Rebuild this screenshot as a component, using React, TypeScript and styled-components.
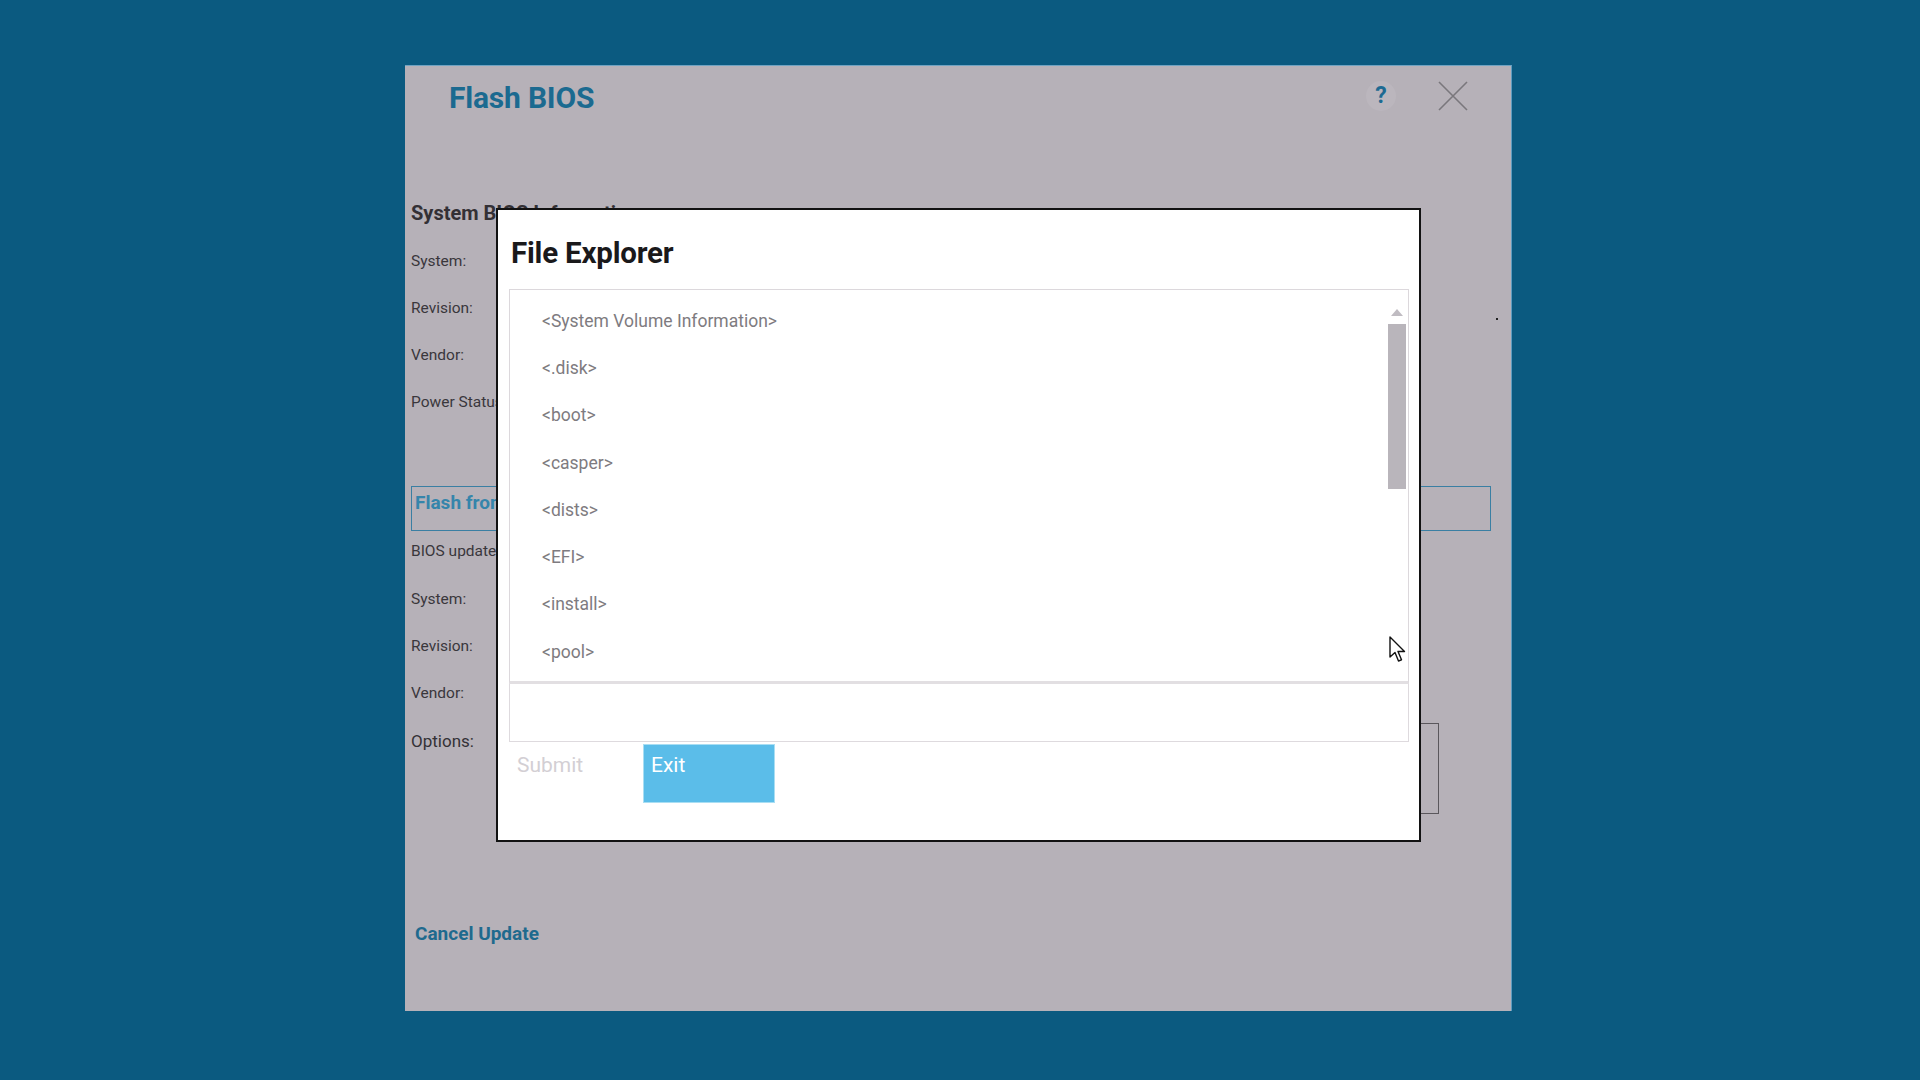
import React from "react";
import styled, { createGlobalStyle } from "styled-components";

const Global = createGlobalStyle`
  html, body { margin: 0; padding: 0; }
  body {
    background: #0b5a80;
    font-family: Roboto, "Liberation Sans", Arial, sans-serif;
  }
  #root { min-height: 1080px; }
`;

const Page = styled.div`
  width: 1920px;
  height: 1080px;
  box-sizing: border-box;
  padding: 65px 0 0 405px;
  background: #0b5a80;
  overflow: hidden;
`;

const Window = styled.div`
  position: relative;
  width: 1107px;
  height: 946px;
  box-sizing: border-box;
  background: #b6b1b8;
  border-top: 1px solid #6fa3c2;
  border-right: 1px solid #5f9cc0;
  display: flex;
  flex-direction: column;
  padding: 0 6px;
`;

const Header = styled.div`
  display: flex;
  align-items: flex-start;
  height: 122px;
  padding: 15px 37px 0 38px;
  box-sizing: border-box;
`;

const Title = styled.h1`
  margin: 0;
  font-size: 30px;
  line-height: 34px;
  font-weight: 700;
  color: #1b6a90;
  letter-spacing: -0.2px;
  flex: 1;
`;

const HelpIcon = styled.div`
  width: 30px;
  height: 30px;
  margin-top: 0px;
  border-radius: 50%;
  background: #bbb6bd;
  color: #1d6a92;
  font-weight: 700;
  font-size: 23px;
  line-height: 30px;
  text-align: center;
`;

const CloseBtn = styled.div`
  width: 30px;
  height: 30px;
  margin-left: 42px;
`;

const SectionHeading = styled.div`
  height: 49px;
  display: flex;
  align-items: center;
  font-size: 20px;
  font-weight: 700;
  color: #333035;
`;

const Row = styled.div<{ $h?: number; $pb?: number }>`
  height: ${(p) => p.$h ?? 47}px;
  box-sizing: border-box;
  padding-bottom: ${(p) => p.$pb ?? 0}px;
  display: flex;
  align-items: center;
  font-size: 15.5px;
  color: #3a373c;
`;

const FlashFromBox = styled.div`
  margin-top: 61px;
  height: 45px;
  box-sizing: border-box;
  border: 1px solid #3a7fa3;
  padding: 4px 3px 0;
  margin-right: 14px;
  font-size: 19px;
  font-weight: 700;
  color: #3585ab;
`;

const OptionsRow = styled.div`
  height: 100px;
  display: flex;
  align-items: flex-start;
`;

const OptionsLabel = styled.div`
  width: 110px;
  padding-top: 15px;
  font-size: 17px;
  color: #343136;
`;

const OptionsBox = styled.div`
  margin-top: 7px;
  width: 918px;
  height: 91px;
  box-sizing: border-box;
  border: 1px solid #5a575c;
`;

const CancelLink = styled.div`
  margin-top: 106px;
  padding-left: 4px;
  font-size: 19px;
  font-weight: 700;
  color: #1f6a8e;
`;

const Dot = styled.div`
  position: absolute;
  left: 1091px;
  top: 252px;
  width: 2px;
  height: 2px;
  background: #222;
`;

/* Modal */
const Modal = styled.div`
  position: absolute;
  left: 91px;
  top: 142px;
  width: 925px;
  height: 634px;
  box-sizing: border-box;
  background: #ffffff;
  border: 2px solid #121212;
  padding: 0 10px 0 11px;
  display: flex;
  flex-direction: column;
`;

const ModalTitle = styled.h2`
  margin: 26px 0 0 2px;
  font-size: 29.5px;
  line-height: 34px;
  font-weight: 700;
  color: #1a191b;
  letter-spacing: -0.2px;
`;

const ListBox = styled.div`
  margin-top: 19px;
  height: 395px;
  box-sizing: border-box;
  border: 1px solid #dcd8dc;
  border-bottom: 3px solid #e2dfe2;
  display: flex;
`;

const ItemList = styled.ul`
  list-style: none;
  margin: 0;
  padding: 7px 0 0 32px;
  flex: 1;
`;

const Item = styled.li`
  height: 47.3px;
  display: flex;
  align-items: center;
  font-size: 17.5px;
  color: #7e7b80;
`;

const ScrollBar = styled.div`
  width: 20px;
  margin-right: 1px;
  display: flex;
  flex-direction: column;
  align-items: center;
  padding-top: 19px;
`;

const ArrowUp = styled.div`
  width: 0;
  height: 0;
  border-left: 6px solid transparent;
  border-right: 6px solid transparent;
  border-bottom: 7px solid #c0bcc2;
`;

const Thumb = styled.div`
  margin-top: 8px;
  width: 18px;
  height: 165px;
  background: #b9b5bb;
`;

const InputBox = styled.div`
  height: 58px;
  box-sizing: border-box;
  border: 1px solid #dedade;
  border-top: none;
`;

const ButtonRow = styled.div`
  display: flex;
  align-items: flex-start;
  margin-top: 2px;
`;

const SubmitBtn = styled.div`
  width: 134px;
  height: 59px;
  box-sizing: border-box;
  padding: 9px 0 0 8px;
  font-size: 21px;
  line-height: 25px;
  color: #d3cfd4;
`;

const ExitBtn = styled.div`
  width: 132px;
  height: 59px;
  box-sizing: border-box;
  background: #5bbde9;
  border: 1px solid #a9def3;
  padding: 8px 0 0 7px;
  font-size: 21px;
  line-height: 25px;
  color: #ffffff;
`;

const Cursor = styled.svg`
  position: absolute;
  left: 984px;
  top: 570px;
`;

const items = [
  "<System Volume Information>",
  "<.disk>",
  "<boot>",
  "<casper>",
  "<dists>",
  "<EFI>",
  "<install>",
  "<pool>",
];

export default function App() {
  return (
    <>
      <Global />
      <Page>
        <Window>
          <Header>
            <Title>Flash BIOS</Title>
            <HelpIcon>?</HelpIcon>
            <CloseBtn>
              <svg width="30" height="30" viewBox="0 0 30 30">
                <path d="M1 1 L29 29 M29 1 L1 29" stroke="#7a777c" strokeWidth="1.6" fill="none" />
              </svg>
            </CloseBtn>
          </Header>
          <SectionHeading>System BIOS Information</SectionHeading>
          <Row>System:</Row>
          <Row>Revision:</Row>
          <Row>Vendor:</Row>
          <Row>Power Status:</Row>
          <FlashFromBox>Flash from file</FlashFromBox>
          <Row $h={44} $pb={5}>BIOS update file:</Row>
          <Row>System:</Row>
          <Row>Revision:</Row>
          <Row>Vendor:</Row>
          <OptionsRow>
            <OptionsLabel>Options:</OptionsLabel>
            <OptionsBox />
          </OptionsRow>
          <CancelLink>Cancel Update</CancelLink>
          <Dot />

          <Modal>
            <ModalTitle>File Explorer</ModalTitle>
            <ListBox>
              <ItemList>
                {items.map((it) => (
                  <Item key={it}>{it}</Item>
                ))}
              </ItemList>
              <ScrollBar>
                <ArrowUp />
                <Thumb />
              </ScrollBar>
            </ListBox>
            <InputBox />
            <ButtonRow>
              <SubmitBtn>Submit</SubmitBtn>
              <ExitBtn>Exit</ExitBtn>
            </ButtonRow>
          </Modal>

          <Cursor width="18" height="28" viewBox="0 0 18 28">
            <path
              d="M1 1 L1 21 L6 16.5 L9.5 25 L12.5 23.8 L9 15.5 L15.5 15.5 Z"
              fill="#ffffff"
              stroke="#111"
              strokeWidth="1.4"
              strokeLinejoin="round"
            />
          </Cursor>
        </Window>
      </Page>
    </>
  );
}
